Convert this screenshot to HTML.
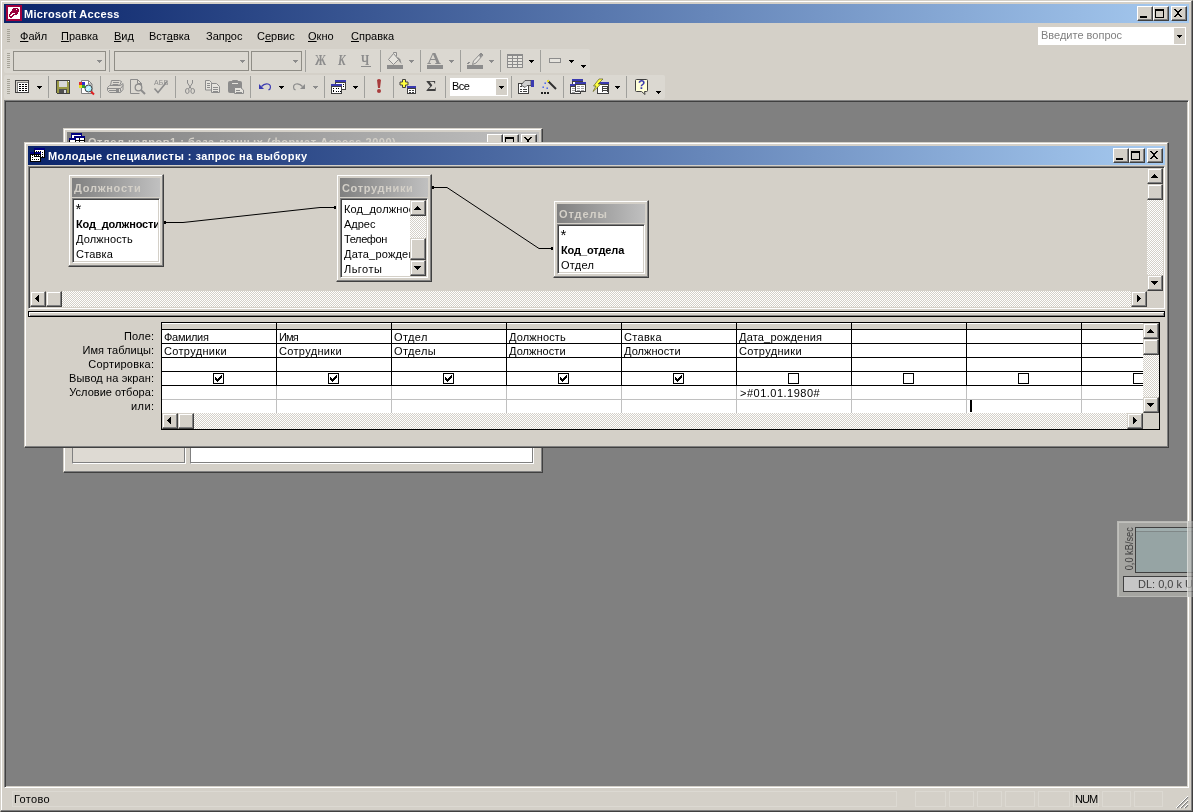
<!DOCTYPE html>
<html lang="ru"><head><meta charset="utf-8"><title>Microsoft Access</title>
<style>
*{box-sizing:border-box;margin:0;padding:0}
html,body{width:1193px;height:812px;overflow:hidden;background:#d4d0c8}
body{position:relative;font-family:"Liberation Sans",sans-serif;font-size:11px;color:#000;line-height:13px}
.a{position:absolute}
.t{position:absolute;white-space:nowrap;line-height:13px;height:13px}
.b{font-weight:bold}
u{text-decoration:underline;text-underline-offset:1px}
/* classic 3D */
.btn{position:absolute;background:#d4d0c8;border:1px solid;border-color:#fff #404040 #404040 #fff;box-shadow:inset -1px -1px 0 #808080}
.sb{position:absolute;background:#d4d0c8;border:1px solid;border-color:#d4d0c8 #404040 #404040 #d4d0c8;box-shadow:inset -1px -1px 0 #808080,inset 1px 1px 0 #fff}
.win{position:absolute;background:#d4d0c8;border:1px solid;border-color:#d4d0c8 #404040 #404040 #d4d0c8;box-shadow:inset -1px -1px 0 #808080,inset 1px 1px 0 #fff}
.sunk{position:absolute;border:1px solid;border-color:#808080 #fff #fff #808080;box-shadow:inset 1px 1px 0 #404040,inset -1px -1px 0 #d4d0c8}
.trk{position:absolute;background:repeating-conic-gradient(#fff 0% 25%,#d4d0c8 0% 50%) 0 0/2px 2px}
.tba{position:absolute;background:linear-gradient(90deg,#0a246a,#a6caf0)}
.tbi{position:absolute;background:linear-gradient(90deg,#808080,#c0c0c0)}
.sep{position:absolute;width:1px;background:#a0a09c}
svg{position:absolute;overflow:visible}
</style></head>
<body>
<div id="root" style="position:absolute;left:0;top:0;width:1193px;height:812px;will-change:transform">
<div class="a" style="left:0px;top:0px;width:1193px;height:812px;background:#d4d0c8;border:1px solid;border-color:#d4d0c8 #404040 #404040 #d4d0c8;box-shadow:inset -1px -1px 0 #808080,inset 1px 1px 0 #fff"></div>
<div class="tba" style="left:4px;top:4px;width:1185px;height:19px;"></div>
<svg style="left:6px;top:5px" width="16" height="16" viewBox="0 0 16 16" shape-rendering="crispEdges"><path d="M0 0h16v1h-16zM0 1h16v1h-16zM0 2h2v1h-2zM14 2h2v1h-2zM0 3h2v1h-2zM14 3h2v1h-2zM0 4h2v1h-2zM14 4h2v1h-2zM0 5h2v1h-2zM14 5h2v1h-2zM0 6h2v1h-2zM14 6h2v1h-2zM0 7h2v1h-2zM14 7h2v1h-2zM0 8h2v1h-2zM14 8h2v1h-2zM0 9h2v1h-2zM14 9h2v1h-2zM0 10h2v1h-2zM14 10h2v1h-2zM0 11h2v1h-2zM14 11h2v1h-2zM0 12h2v1h-2zM14 12h2v1h-2zM0 13h2v1h-2zM14 13h2v1h-2zM0 14h16v1h-16zM0 15h16v1h-16z" fill="#a0003c"/><path d="M2 2h12v1h-12zM2 3h5v1h-5zM12 3h2v1h-2zM2 4h4v1h-4zM10 4h1v1h-1zM13 4h1v1h-1zM2 5h4v1h-4zM13 5h1v1h-1zM2 6h3v1h-3zM13 6h1v1h-1zM2 7h2v1h-2zM12 7h2v1h-2zM2 8h2v1h-2zM6 8h3v1h-3zM12 8h2v1h-2zM2 9h1v1h-1zM5 9h2v1h-2zM11 9h3v1h-3zM2 10h1v1h-1zM4 10h2v1h-2zM8 10h6v1h-6zM2 11h1v1h-1zM7 11h7v1h-7zM2 12h2v1h-2zM6 12h8v1h-8zM2 13h12v1h-12z" fill="#fff"/><path d="M7 3h5v1h-5zM6 4h4v1h-4zM11 4h2v1h-2zM6 5h7v1h-7zM5 6h8v1h-8zM4 7h8v1h-8zM4 8h2v1h-2zM9 8h3v1h-3zM3 9h2v1h-2zM7 9h4v1h-4zM3 10h1v1h-1zM6 10h2v1h-2zM3 11h4v1h-4zM4 12h2v1h-2z" fill="#98003c"/></svg>
<div class="t b" style="left:24px;top:8px;color:#fff;letter-spacing:.32px">Microsoft Access</div>
<div class="btn" style="left:1137px;top:6px;width:16px;height:15px;"></div>
<div class="a" style="left:1140px;top:16px;width:7px;height:2px;background:#000"></div>
<div class="btn" style="left:1153px;top:6px;width:16px;height:15px;"></div>
<div class="a" style="left:1155px;top:9px;width:9px;height:9px;border:1px solid #000;border-top-width:2px"></div>
<div class="btn" style="left:1171px;top:6px;width:16px;height:15px;"></div>
<svg style="left:1174px;top:9px" width="8" height="8" shape-rendering="crispEdges"><path d="M0 0h2v1h-2zM6 0h2v1h-2zM1 1h2v1h-2zM5 1h2v1h-2zM2 2h4v1h-4zM3 3h2v1h-2zM3 4h2v1h-2zM2 5h4v1h-4zM1 6h2v1h-2zM5 6h2v1h-2zM0 7h2v1h-2zM6 7h2v1h-2z" fill="#000"/></svg>
<div class="a" style="left:7px;top:29px;width:3px;height:14px;background:repeating-linear-gradient(180deg,#a6a398 0 1px,transparent 1px 2px)"></div>
<div class="t " style="left:20px;top:30px;"><u>Ф</u>айл</div>
<div class="t " style="left:61px;top:30px;"><u>П</u>равка</div>
<div class="t " style="left:114px;top:30px;"><u>В</u>ид</div>
<div class="t " style="left:149px;top:30px;">Вст<u>а</u>вка</div>
<div class="t " style="left:206px;top:30px;">Зап<u>р</u>ос</div>
<div class="t " style="left:257px;top:30px;">С<u>е</u>рвис</div>
<div class="t " style="left:308px;top:30px;"><u>О</u>кно</div>
<div class="t " style="left:351px;top:30px;"><u>С</u>правка</div>
<div class="a" style="left:1038px;top:27px;width:148px;height:18px;background:#fff"></div>
<div class="a" style="left:1174px;top:28px;width:11px;height:16px;background:#d4d0c8"></div>
<svg style="left:1177px;top:35px" width="5" height="3" shape-rendering="crispEdges"><polygon points="0,0 5,0 2.5,3" fill="#000"/></svg>
<div class="t " style="left:1041px;top:29px;color:#808080">Введите вопрос</div>
<div class="a" style="left:4px;top:49px;width:586px;height:24px;background:#dbd8d1;border-radius:2px"></div>
<div class="a" style="left:4px;top:75px;width:661px;height:24px;background:#dbd8d1;border-radius:2px"></div>
<div class="a" style="left:7px;top:53px;width:3px;height:16px;background:repeating-linear-gradient(180deg,#a6a398 0 1px,transparent 1px 2px)"></div>
<div class="a" style="left:7px;top:79px;width:3px;height:16px;background:repeating-linear-gradient(180deg,#a6a398 0 1px,transparent 1px 2px)"></div>
<div class="a" style="left:13px;top:51px;width:93px;height:20px;border:1px solid #8f8d86"></div>
<svg style="left:97px;top:60px" width="5" height="3" shape-rendering="crispEdges"><polygon points="0,0 5,0 2.5,3" fill="#8c8c8c"/></svg>
<div class="a" style="left:114px;top:51px;width:135px;height:20px;border:1px solid #8f8d86"></div>
<svg style="left:240px;top:60px" width="5" height="3" shape-rendering="crispEdges"><polygon points="0,0 5,0 2.5,3" fill="#8c8c8c"/></svg>
<div class="a" style="left:251px;top:51px;width:51px;height:20px;border:1px solid #8f8d86"></div>
<svg style="left:293px;top:60px" width="5" height="3" shape-rendering="crispEdges"><polygon points="0,0 5,0 2.5,3" fill="#8c8c8c"/></svg>
<div class="sep" style="left:109px;top:50px;width:1px;height:22px;"></div>
<div class="sep" style="left:305px;top:50px;width:1px;height:22px;"></div>
<div class="sep" style="left:380px;top:50px;width:1px;height:22px;"></div>
<div class="sep" style="left:420px;top:50px;width:1px;height:22px;"></div>
<div class="sep" style="left:460px;top:50px;width:1px;height:22px;"></div>
<div class="sep" style="left:500px;top:50px;width:1px;height:22px;"></div>
<div class="sep" style="left:540px;top:50px;width:1px;height:22px;"></div>
<div class="sep" style="left:48px;top:76px;width:1px;height:22px;"></div>
<div class="sep" style="left:100px;top:76px;width:1px;height:22px;"></div>
<div class="sep" style="left:175px;top:76px;width:1px;height:22px;"></div>
<div class="sep" style="left:250px;top:76px;width:1px;height:22px;"></div>
<div class="sep" style="left:324px;top:76px;width:1px;height:22px;"></div>
<div class="sep" style="left:364px;top:76px;width:1px;height:22px;"></div>
<div class="sep" style="left:393px;top:76px;width:1px;height:22px;"></div>
<div class="sep" style="left:445px;top:76px;width:1px;height:22px;"></div>
<div class="sep" style="left:511px;top:76px;width:1px;height:22px;"></div>
<div class="sep" style="left:563px;top:76px;width:1px;height:22px;"></div>
<div class="sep" style="left:626px;top:76px;width:1px;height:22px;"></div>
<div class="t b" style="left:315px;top:53px;font-family:Liberation Serif,serif;font-size:14px;line-height:15px;height:15px;transform:scaleX(.8);transform-origin:0 0;color:#8c8c8c;letter-spacing:0">Ж</div>
<div class="t b" style="left:338px;top:53px;font-family:Liberation Serif,serif;font-size:14px;line-height:15px;height:15px;transform:scaleX(.8);transform-origin:0 0;color:#8c8c8c;font-style:italic">К</div>
<div class="t b" style="left:361px;top:53px;font-family:Liberation Serif,serif;font-size:14px;line-height:15px;height:15px;transform:scaleX(.8);transform-origin:0 0;color:#8c8c8c">Ч</div>
<div class="a" style="left:361px;top:66px;width:10px;height:1px;background:#8c8c8c"></div>
<div class="t b" style="left:427px;top:50px;font-family:Liberation Serif,serif;font-size:16px;line-height:18px;height:18px;transform:scaleX(1.2);transform-origin:0 0;color:#8c8c8c">A</div>
<div class="a" style="left:387px;top:65px;width:16px;height:4px;background:#8c8c8c"></div>
<div class="a" style="left:427px;top:65px;width:16px;height:4px;background:#8c8c8c"></div>
<div class="a" style="left:467px;top:65px;width:16px;height:4px;background:#8c8c8c"></div>
<svg style="left:409px;top:60px" width="5" height="3" shape-rendering="crispEdges"><polygon points="0,0 5,0 2.5,3" fill="#8c8c8c"/></svg>
<svg style="left:449px;top:60px" width="5" height="3" shape-rendering="crispEdges"><polygon points="0,0 5,0 2.5,3" fill="#8c8c8c"/></svg>
<svg style="left:489px;top:60px" width="5" height="3" shape-rendering="crispEdges"><polygon points="0,0 5,0 2.5,3" fill="#8c8c8c"/></svg>
<svg style="left:529px;top:60px" width="5" height="3" shape-rendering="crispEdges"><polygon points="0,0 5,0 2.5,3" fill="#000"/></svg>
<svg style="left:569px;top:60px" width="5" height="3" shape-rendering="crispEdges"><polygon points="0,0 5,0 2.5,3" fill="#000"/></svg>
<svg style="left:581px;top:65px" width="5" height="3" shape-rendering="crispEdges"><polygon points="0,0 5,0 2.5,3" fill="#000"/></svg>
<div class="a" style="left:549px;top:58px;width:12px;height:5px;border:1px solid #8c8c8c;background:#e6e4de"></div>
<svg style="left:15px;top:80px" width="14" height="13" viewBox="0 0 14 13" shape-rendering="crispEdges"><path d="M0 0h14v1h-14zM0 1h1v1h-1zM13 1h1v1h-1zM0 2h1v1h-1zM13 2h1v1h-1zM0 3h1v1h-1zM13 3h1v1h-1zM0 4h1v1h-1zM13 4h1v1h-1zM0 5h1v1h-1zM13 5h1v1h-1zM0 6h1v1h-1zM13 6h1v1h-1zM0 7h1v1h-1zM13 7h1v1h-1zM0 8h1v1h-1zM13 8h1v1h-1zM0 9h1v1h-1zM13 9h1v1h-1zM0 10h1v1h-1zM13 10h1v1h-1zM0 11h1v1h-1zM13 11h1v1h-1zM0 12h14v1h-14z" fill="#404040"/><path d="M1 1h12v1h-12zM1 2h1v1h-1zM1 3h1v1h-1zM1 4h1v1h-1zM1 5h1v1h-1zM1 6h1v1h-1zM1 7h1v1h-1zM1 8h1v1h-1zM1 9h1v1h-1zM1 10h1v1h-1zM1 11h1v1h-1z" fill="#d4d0c8"/><path d="M2 2h11v1h-11zM2 3h1v1h-1zM2 4h1v1h-1zM2 5h1v1h-1zM2 6h1v1h-1zM2 7h1v1h-1zM2 8h1v1h-1zM2 9h1v1h-1zM2 10h1v1h-1zM2 11h1v1h-1z" fill="#808080"/><path d="M3 3h10v1h-10zM3 4h1v1h-1zM6 4h1v1h-1zM9 4h1v1h-1zM12 4h1v1h-1zM3 5h10v1h-10zM3 6h1v1h-1zM6 6h1v1h-1zM9 6h1v1h-1zM12 6h1v1h-1zM3 7h10v1h-10zM3 8h1v1h-1zM6 8h1v1h-1zM9 8h1v1h-1zM12 8h1v1h-1zM3 9h10v1h-10zM3 10h1v1h-1zM6 10h1v1h-1zM9 10h1v1h-1zM12 10h1v1h-1zM3 11h10v1h-10z" fill="#fff"/><path d="M4 4h2v1h-2zM7 4h2v1h-2zM10 4h2v1h-2zM4 6h2v1h-2zM7 6h2v1h-2zM10 6h2v1h-2zM4 8h2v1h-2zM7 8h2v1h-2zM10 8h2v1h-2zM4 10h2v1h-2zM7 10h2v1h-2zM10 10h2v1h-2z" fill="#000"/></svg>
<svg style="left:37px;top:86px" width="5" height="3" shape-rendering="crispEdges"><polygon points="0,0 5,0 2.5,3" fill="#000"/></svg>
<svg style="left:56px;top:80px" width="14" height="14" viewBox="0 0 14 14" shape-rendering="crispEdges"><path d="M0 0h14v1h-14zM0 1h1v1h-1zM13 1h1v1h-1zM0 2h1v1h-1zM13 2h1v1h-1zM0 3h1v1h-1zM13 3h1v1h-1zM0 4h1v1h-1zM13 4h1v1h-1zM0 5h1v1h-1zM13 5h1v1h-1zM0 6h1v1h-1zM13 6h1v1h-1zM0 7h1v1h-1zM13 7h1v1h-1zM0 8h1v1h-1zM13 8h1v1h-1zM0 9h1v1h-1zM13 9h1v1h-1zM0 10h1v1h-1zM13 10h1v1h-1zM0 11h1v1h-1zM13 11h1v1h-1zM0 12h1v1h-1zM13 12h1v1h-1zM1 13h13v1h-13z" fill="#404040"/><path d="M1 1h2v1h-2zM11 1h1v1h-1zM1 2h2v1h-2zM11 2h2v1h-2zM1 3h2v1h-2zM11 3h2v1h-2zM1 4h2v1h-2zM11 4h2v1h-2zM1 5h2v1h-2zM11 5h2v1h-2zM1 6h2v1h-2zM11 6h2v1h-2zM1 7h12v1h-12zM1 8h12v1h-12zM1 9h2v1h-2zM11 9h2v1h-2zM1 10h2v1h-2zM11 10h2v1h-2zM1 11h2v1h-2zM11 11h2v1h-2zM1 12h2v1h-2zM11 12h2v1h-2z" fill="#9a9a46"/><path d="M3 1h8v1h-8zM3 2h8v1h-8zM3 3h8v1h-8zM3 4h8v1h-8zM3 5h8v1h-8zM3 6h8v1h-8zM8 10h2v1h-2zM8 11h2v1h-2zM8 12h2v1h-2z" fill="#d8d8d8"/><path d="M12 1h1v1h-1z" fill="#fff"/><path d="M3 9h8v1h-8zM3 10h5v1h-5zM10 10h1v1h-1zM3 11h5v1h-5zM10 11h1v1h-1zM3 12h5v1h-5zM10 12h1v1h-1z" fill="#505050"/></svg>
<svg style="left:0;top:0" width="700" height="100">
<path d="M393.500 53.500l5 6-5 5-5-5zM393.500 53.500v-1h3v4" fill="#e6e4de" stroke="#8c8c8c"/><path d="M397 57q4 1 4.500 7l-2.500-3z" fill="#8c8c8c"/>
<path d="M481 53l2 2-7 8-3.500 1.500 1-3.500z" fill="#e6e4de" stroke="#8c8c8c"/><path d="M479 54l4 0-3 4z" fill="#8c8c8c"/><rect x="468" y="62" width="2" height="1" fill="#8c8c8c"/><rect x="467" y="63" width="2" height="1" fill="#8c8c8c"/>
<g shape-rendering="crispEdges"><rect x="507" y="54" width="16" height="14" fill="#8c8c8c"/><rect x="508" y="56" width="4" height="2" fill="#e6e4de"/><rect x="508" y="59" width="4" height="2" fill="#e6e4de"/><rect x="508" y="62" width="4" height="2" fill="#e6e4de"/><rect x="508" y="65" width="4" height="2" fill="#e6e4de"/><rect x="513" y="56" width="4" height="2" fill="#e6e4de"/><rect x="513" y="59" width="4" height="2" fill="#e6e4de"/><rect x="513" y="62" width="4" height="2" fill="#e6e4de"/><rect x="513" y="65" width="4" height="2" fill="#e6e4de"/><rect x="518" y="56" width="4" height="2" fill="#e6e4de"/><rect x="518" y="59" width="4" height="2" fill="#e6e4de"/><rect x="518" y="62" width="4" height="2" fill="#e6e4de"/><rect x="518" y="65" width="4" height="2" fill="#e6e4de"/></g>
<path d="M81.500 80.500h7l3.500 3.500v9.500h-10.500z" fill="#fff" stroke="#808080"/><path d="M88.500 80.500v3.500h3.500" fill="none" stroke="#808080"/><g shape-rendering="crispEdges"><rect x="79" y="82" width="3" height="3" fill="#e03030"/><rect x="82" y="82" width="3" height="3" fill="#3030d0"/><rect x="79" y="85" width="3" height="3" fill="#e0e020"/><rect x="82" y="85" width="3" height="3" fill="#30a030"/></g><circle cx="88.500" cy="88.500" r="3.500" fill="#b0f0ff" stroke="#404040"/><path d="M86.500 90l3-3" stroke="#fff"/><path d="M91 91.500l3 3" stroke="#e02020" stroke-width="2"/>
<g fill="none" stroke="#8c8c8c"><path d="M111.500 80.500h8l2 1-2 4h-9z"/><path d="M113 82.500h6M112.500 84.500h6"/><path d="M109.500 85.500h11l2.500-2v6l-2.500 3h-11l-2-2v-3z"/><path d="M107.500 88.500h13v3M120.500 88.500l2.500-3M109 90.500h8"/></g><rect x="116" y="89" width="3" height="3" fill="#8c8c8c"/>
<g fill="none" stroke="#8c8c8c"><path d="M130.500 79.500h7l4 4v2M130.500 79.500v14h9"/><path d="M137.500 79.500v4h4"/><circle cx="138.500" cy="87.500" r="3.300" stroke-width="1.300"/><path d="M141 90l4 4" stroke-width="2"/></g>
<path d="M154.500 88.500l3.500 4 9-11" fill="none" stroke="#8c8c8c" stroke-width="1.600"/>
<g fill="none" stroke="#8c8c8c"><path d="M187.500 80v3l4 6M192.500 80v3l-4 6"/><ellipse cx="187.300" cy="91" rx="1.800" ry="2.500"/><ellipse cx="192.700" cy="91" rx="1.800" ry="2.500"/></g>
<g stroke="#8c8c8c" fill="#e6e4de"><path d="M205.500 80.500h4l2 2v7.500h-6z"/><path d="M211.500 83.500h5l3 3v6h-8z"/></g><path d="M207 83.500h3M207 85.500h3M207 87.500h3M213 87.500h5M213 89.500h5M213 91.500h5" stroke="#8c8c8c" shape-rendering="crispEdges"/>
<rect x="228" y="81" width="14" height="12" rx="2" fill="#8c8c8c"/><rect x="232" y="80" width="6" height="2" rx="1" fill="#8c8c8c"/><rect x="232" y="83" width="6" height="1" fill="#e6e4de"/><path d="M234.500 87.500h6l3 2.500v3.500h-9z" fill="#e6e4de" stroke="#8c8c8c"/><path d="M236 90.500h4M236 92.500h6" stroke="#8c8c8c" shape-rendering="crispEdges"/>
<path d="M259 84v5h5z" fill="#3a3ab0"/><path d="M261.500 86.500q3-3.500 6.500-2.500t2 5l-1.500 1" fill="none" stroke="#3a3ab0" stroke-width="1.200"/>
<path d="M305 84v5h-5z" fill="#8c8c8c"/><path d="M302.500 86.500q-3-3.500-6.500-2.500t-2 5l1.500 1" fill="none" stroke="#8c8c8c" stroke-width="1.200"/>
<g shape-rendering="crispEdges"><rect x="335" y="80" width="11" height="2" fill="#3a3ab0"/><rect x="335.500" y="82.500" width="10" height="7" fill="#fff" stroke="#404040"/><path d="M337 84.500h7M343 86.500h2" stroke="#000" stroke-dasharray="1 1"/><rect x="331" y="84" width="11" height="2" fill="#3a3ab0"/><rect x="331.500" y="86.500" width="10" height="7" fill="#fff" stroke="#404040"/><path d="M333 88.500h2M336 88.500h4M333 90.500h2M333 91.500h0M336 91.500h5M333 91.500h2" stroke="#000" stroke-dasharray="1 1"/></g>
<path d="M377 80q2-2 4 0l-1 8h-2z" fill="#a83c3c"/><circle cx="379" cy="91" r="2" fill="#a83c3c"/>
<path d="M402.500 79.500h3v2.500h2.500v3h-2.500v2.500h-3v-2.500h-2.500v-3h2.500z" fill="#ffff40" stroke="#404040"/><g shape-rendering="crispEdges"><rect x="407" y="86" width="9" height="2" fill="#3a3ab0"/><rect x="407.500" y="88.500" width="8" height="5" fill="#fff" stroke="#404040"/><path d="M409 90.500h2M412 90.500h2M409 92.500h2M412 92.500h2" stroke="#404040"/></g>
<g shape-rendering="crispEdges"><rect x="518.500" y="83.500" width="10" height="10" fill="#fff" stroke="#404040"/><path d="M520 86.500h2M520 89.500h2M523 89.500h4M520 91.500h2M523 91.500h4" stroke="#404040"/></g><path d="M521 85l4-4.500h6v5h-4l-2 2z" fill="#d0d0d0" stroke="#404040" stroke-width=".8"/><rect x="531" y="80" width="3" height="7" fill="#3a3ab0"/>
<path d="M547.500 80.500l8.500 8.500" stroke="#303030" stroke-width="2"/><rect x="547" y="80" width="2" height="2" fill="#e8e020"/><g fill="#3050f0"><rect x="544.500" y="82.500" width="1.400" height="1.400"/><rect x="542.500" y="86.500" width="1.400" height="1.400"/><rect x="546.500" y="87.500" width="1.400" height="1.400"/></g><g fill="#202020"><rect x="541" y="92" width="2" height="2"/><rect x="544" y="92" width="2" height="2"/><rect x="547" y="92" width="2" height="2"/></g>
<g shape-rendering="crispEdges"><rect x="572" y="79" width="11" height="2" fill="#3a3ab0"/><rect x="572.5" y="81.5" width="10" height="6" fill="#fff" stroke="#404040"/><rect x="570" y="84" width="11" height="2" fill="#3a3ab0"/><rect x="570.5" y="86.5" width="10" height="7" fill="#fff" stroke="#404040"/><path d="M572 88.500h3M572 90.500h3M572 92.500h3" stroke="#a0a0a0"/><rect x="575" y="82" width="11" height="2" fill="#3a3ab0"/><rect x="575.5" y="84.5" width="10" height="7" fill="#fff" stroke="#404040"/><path d="M577 86.500h3M581 86.500h3M577 88.500h3M581 88.500h3M577 90.500h3M581 90.500h3" stroke="#a0a0a0"/></g>
<g shape-rendering="crispEdges"><rect x="597" y="82" width="12" height="2" fill="#3a3ab0"/><rect x="597.5" y="84.5" width="11" height="9" fill="#fff" stroke="#404040"/><path d="M603 86.500h4M603 90.500h4M602.500 86v6M607.500 86v6M603 88.500h4" stroke="#404040" fill="none"/></g><path d="M599 79h4l-5 5h3l-8 7.500 3-5.500h-2.500z" fill="#ffff40" stroke="#606020" stroke-width=".7"/>
<path d="M636.500 79.500h10q1 0 1 1v10q0 1-1 1h-2l.5 3-3.500-3h-5q-1 0-1-1v-10q0-1 1-1z" fill="#ffffd8" stroke="#404040"/>
</svg>
<div class="t " style="left:154px;top:79px;color:#8c8c8c;font-size:7px;line-height:7px;height:7px;letter-spacing:.2px">АБВ</div>
<svg style="left:279px;top:86px" width="5" height="3" shape-rendering="crispEdges"><polygon points="0,0 5,0 2.5,3" fill="#000"/></svg>
<svg style="left:313px;top:86px" width="5" height="3" shape-rendering="crispEdges"><polygon points="0,0 5,0 2.5,3" fill="#8c8c8c"/></svg>
<svg style="left:353px;top:86px" width="5" height="3" shape-rendering="crispEdges"><polygon points="0,0 5,0 2.5,3" fill="#000"/></svg>
<svg style="left:615px;top:86px" width="5" height="3" shape-rendering="crispEdges"><polygon points="0,0 5,0 2.5,3" fill="#000"/></svg>
<svg style="left:656px;top:91px" width="5" height="3" shape-rendering="crispEdges"><polygon points="0,0 5,0 2.5,3" fill="#000"/></svg>
<div class="t b" style="left:426px;top:79px;font-family:Liberation Serif,serif;font-size:14px;line-height:16px;height:16px;color:#404040;transform:scaleX(1.15);transform-origin:0 0">Σ</div>
<div class="a" style="left:450px;top:78px;width:58px;height:18px;background:#fff"></div>
<div class="a" style="left:496px;top:79px;width:11px;height:16px;background:#d4d0c8"></div>
<svg style="left:499px;top:86px" width="5" height="3" shape-rendering="crispEdges"><polygon points="0,0 5,0 2.5,3" fill="#000"/></svg>
<div class="t " style="left:452px;top:80px;letter-spacing:-.6px">Все</div>
<div class="t b" style="left:638px;top:79px;color:#3a3ab0;font-size:12px;line-height:13px">?</div>
<div class="a" style="left:4px;top:100px;width:1185px;height:688px;background:#808080;border:1px solid;border-color:#808080 #fff #fff #808080;box-shadow:inset 1px 1px 0 #404040,inset -1px -1px 0 #d4d0c8"></div>
<div class="win" style="left:63px;top:128px;width:480px;height:345px;"></div>
<div class="tbi" style="left:67px;top:132px;width:472px;height:19px;"></div>
<svg style="left:69px;top:133px" width="16" height="16" viewBox="0 0 16 16" shape-rendering="crispEdges"><rect x="2.500" y="0.500" width="10" height="8" fill="#fff" stroke="#000080"/><rect x="2" y="0" width="11" height="2" fill="#000080"/><rect x="5.500" y="3.500" width="10" height="9" fill="#fff" stroke="#000"/><rect x="5" y="3" width="11" height="2" fill="#000080"/><rect x="0.500" y="5.500" width="6" height="8" fill="#fff" stroke="#000"/><rect x="0" y="5" width="7" height="2" fill="#000080"/><path d="M7 7.500h8M7 10.500h8M10.500 5v8" stroke="#000"/></svg>
<div class="t b" style="left:88px;top:136px;color:#d4d0c8;letter-spacing:.53px">Отдел кадров1 : база данных (формат Access 2000)</div>
<div class="btn" style="left:487px;top:134px;width:16px;height:15px;"></div>
<div class="a" style="left:490px;top:144px;width:7px;height:2px;background:#000"></div>
<div class="btn" style="left:503px;top:134px;width:16px;height:15px;"></div>
<div class="a" style="left:505px;top:137px;width:9px;height:9px;border:1px solid #000;border-top-width:2px"></div>
<div class="btn" style="left:521px;top:134px;width:16px;height:15px;"></div>
<svg style="left:524px;top:137px" width="8" height="8" shape-rendering="crispEdges"><path d="M0 0h2v1h-2zM6 0h2v1h-2zM1 1h2v1h-2zM5 1h2v1h-2zM2 2h4v1h-4zM3 3h2v1h-2zM3 4h2v1h-2zM2 5h4v1h-4zM1 6h2v1h-2zM5 6h2v1h-2zM0 7h2v1h-2zM6 7h2v1h-2z" fill="#000"/></svg>
<div class="a" style="left:72px;top:440px;width:114px;height:24px;background:#dedad3;border:1px solid;border-color:#808080 #fff #fff #808080;box-shadow:inset -1px -1px 0 #808080"></div>
<div class="a" style="left:190px;top:440px;width:344px;height:24px;background:#fff;border:1px solid;border-color:#808080 #fff #fff #808080;box-shadow:inset -1px -1px 0 #808080"></div>
<div class="win" style="left:24px;top:142px;width:1145px;height:306px;"></div>
<div class="tba" style="left:28px;top:146px;width:1137px;height:19px;"></div>
<svg style="left:30px;top:148px" width="15" height="14" viewBox="0 0 15 14" shape-rendering="crispEdges"><path d="M4 0h11v1h-11zM4 1h11v1h-11zM0 4h4v1h-4zM5 4h6v1h-6zM0 5h4v1h-4zM5 5h6v1h-6z" fill="#000080"/><path d="M4 2h1v1h-1zM14 2h1v1h-1zM4 3h1v1h-1zM6 3h1v1h-1zM8 3h1v1h-1zM10 3h1v1h-1zM14 3h1v1h-1zM4 4h1v1h-1zM12 4h1v1h-1zM14 4h1v1h-1zM4 5h1v1h-1zM14 5h1v1h-1zM0 6h11v1h-11zM12 6h1v1h-1zM14 6h1v1h-1zM0 7h1v1h-1zM2 7h1v1h-1zM4 7h1v1h-1zM6 7h1v1h-1zM8 7h1v1h-1zM10 7h1v1h-1zM14 7h1v1h-1zM0 8h1v1h-1zM4 8h7v1h-7zM12 8h1v1h-1zM14 8h1v1h-1zM0 9h1v1h-1zM2 9h1v1h-1zM10 9h5v1h-5zM0 10h1v1h-1zM10 10h1v1h-1zM0 11h1v1h-1zM2 11h1v1h-1zM4 11h1v1h-1zM6 11h1v1h-1zM8 11h1v1h-1zM10 11h1v1h-1zM0 12h1v1h-1zM10 12h1v1h-1zM0 13h11v1h-11z" fill="#000"/><path d="M5 2h9v1h-9zM5 3h1v1h-1zM7 3h1v1h-1zM9 3h1v1h-1zM11 3h3v1h-3zM11 4h1v1h-1zM13 4h1v1h-1zM11 5h3v1h-3zM11 6h1v1h-1zM13 6h1v1h-1zM1 7h1v1h-1zM3 7h1v1h-1zM5 7h1v1h-1zM7 7h1v1h-1zM9 7h1v1h-1zM11 7h3v1h-3zM1 8h3v1h-3zM11 8h1v1h-1zM13 8h1v1h-1zM1 9h1v1h-1zM3 9h7v1h-7zM1 10h9v1h-9zM1 11h1v1h-1zM3 11h1v1h-1zM5 11h1v1h-1zM7 11h1v1h-1zM9 11h1v1h-1zM1 12h9v1h-9z" fill="#fff"/></svg>
<div class="t b" style="left:48px;top:150px;color:#fff;letter-spacing:.45px">Молодые специалисты : запрос на выборку</div>
<div class="btn" style="left:1113px;top:148px;width:16px;height:15px;"></div>
<div class="a" style="left:1116px;top:158px;width:7px;height:2px;background:#000"></div>
<div class="btn" style="left:1129px;top:148px;width:16px;height:15px;"></div>
<div class="a" style="left:1131px;top:151px;width:9px;height:9px;border:1px solid #000;border-top-width:2px"></div>
<div class="btn" style="left:1147px;top:148px;width:16px;height:15px;"></div>
<svg style="left:1150px;top:151px" width="8" height="8" shape-rendering="crispEdges"><path d="M0 0h2v1h-2zM6 0h2v1h-2zM1 1h2v1h-2zM5 1h2v1h-2zM2 2h4v1h-4zM3 3h2v1h-2zM3 4h2v1h-2zM2 5h4v1h-4zM1 6h2v1h-2zM5 6h2v1h-2zM0 7h2v1h-2zM6 7h2v1h-2z" fill="#000"/></svg>
<div class="sunk" style="left:28px;top:166px;width:1137px;height:143px;"></div>
<div class="trk" style="left:1147px;top:168px;width:16px;height:123px;"></div>
<div class="sb" style="left:1147px;top:168px;width:16px;height:16px;"></div>
<svg style="left:1151px;top:174px" width="7" height="4" shape-rendering="crispEdges"><polygon points="0,4 7,4 3.5,0" fill="#000"/></svg>
<div class="sb" style="left:1147px;top:184px;width:16px;height:16px;"></div>
<div class="sb" style="left:1147px;top:275px;width:16px;height:16px;"></div>
<svg style="left:1151px;top:281px" width="7" height="4" shape-rendering="crispEdges"><polygon points="0,0 7,0 3.5,4" fill="#000"/></svg>
<div class="trk" style="left:30px;top:291px;width:1117px;height:16px;"></div>
<div class="sb" style="left:30px;top:291px;width:16px;height:16px;"></div>
<svg style="left:35px;top:295px" width="4" height="7" shape-rendering="crispEdges"><polygon points="4,0 4,7 0,3.5" fill="#000"/></svg>
<div class="sb" style="left:46px;top:291px;width:16px;height:16px;"></div>
<div class="sb" style="left:1131px;top:291px;width:16px;height:16px;"></div>
<svg style="left:1137px;top:295px" width="4" height="7" shape-rendering="crispEdges"><polygon points="0,0 0,7 4,3.5" fill="#000"/></svg>
<div class="win" style="left:68px;top:174px;width:96px;height:93px;"></div>
<div class="tbi" style="left:72px;top:178px;width:88px;height:19px;"></div>
<div class="t b" style="left:74px;top:182px;color:#d4d0c8;letter-spacing:.75px">Должности</div>
<div class="sunk" style="left:72px;top:198px;width:88px;height:65px;background:#fff;overflow:hidden"></div>
<div class="t" style="left:75.5px;top:201px;font-size:15px;line-height:16px;height:16px">*</div>
<div class="t b" style="left:76px;top:217px;width:82px;overflow:hidden;line-height:14px;height:14px;letter-spacing:-0.17px">Код_должности</div>
<div class="t" style="left:76px;top:232px;width:82px;overflow:hidden;line-height:14px;height:14px;letter-spacing:0.12px">Должность</div>
<div class="t" style="left:76px;top:247px;width:82px;overflow:hidden;line-height:14px;height:14px;letter-spacing:0.2px">Ставка</div>
<div class="win" style="left:336px;top:174px;width:96px;height:108px;"></div>
<div class="tbi" style="left:340px;top:178px;width:88px;height:19px;"></div>
<div class="t b" style="left:342px;top:182px;color:#d4d0c8;letter-spacing:.67px">Сотрудники</div>
<div class="sunk" style="left:340px;top:198px;width:88px;height:80px;background:#fff;overflow:hidden"></div>
<div class="t" style="left:344px;top:202px;width:66px;overflow:hidden;line-height:14px;height:14px;letter-spacing:0.17px">Код_должности</div>
<div class="t" style="left:344px;top:217px;width:66px;overflow:hidden;line-height:14px;height:14px;letter-spacing:0px">Адрес</div>
<div class="t" style="left:344px;top:232px;width:66px;overflow:hidden;line-height:14px;height:14px;letter-spacing:-0.38px">Телефон</div>
<div class="t" style="left:344px;top:247px;width:66px;overflow:hidden;line-height:14px;height:14px;letter-spacing:0.19px">Дата_рождения</div>
<div class="t" style="left:344px;top:262px;width:66px;overflow:hidden;line-height:14px;height:14px;letter-spacing:0.46px">Льготы</div>
<div class="trk" style="left:410px;top:200px;width:16px;height:76px;"></div>
<div class="sb" style="left:410px;top:200px;width:16px;height:16px;"></div>
<svg style="left:414px;top:206px" width="7" height="4" shape-rendering="crispEdges"><polygon points="0,4 7,4 3.5,0" fill="#000"/></svg>
<div class="sb" style="left:410px;top:238px;width:16px;height:22px;"></div>
<div class="sb" style="left:410px;top:260px;width:16px;height:16px;"></div>
<svg style="left:414px;top:266px" width="7" height="4" shape-rendering="crispEdges"><polygon points="0,0 7,0 3.5,4" fill="#000"/></svg>
<div class="win" style="left:553px;top:200px;width:96px;height:78px;"></div>
<div class="tbi" style="left:557px;top:204px;width:88px;height:19px;"></div>
<div class="t b" style="left:559px;top:208px;color:#d4d0c8;letter-spacing:.9px">Отделы</div>
<div class="sunk" style="left:557px;top:224px;width:88px;height:50px;background:#fff;overflow:hidden"></div>
<div class="t" style="left:560.5px;top:227px;font-size:15px;line-height:16px;height:16px">*</div>
<div class="t b" style="left:561px;top:243px;width:82px;overflow:hidden;line-height:14px;height:14px;letter-spacing:-0.11px">Код_отдела</div>
<div class="t" style="left:561px;top:258px;width:82px;overflow:hidden;line-height:14px;height:14px;letter-spacing:0.25px">Отдел</div>
<svg style="left:0;top:0" width="1193" height="812"><g fill="none" stroke="#000" stroke-width="1"><path d="M164 222.500H183L320 207.500H336"/><path d="M432 187.500H447L539 248.500H553"/></g><g fill="#000"><rect x="164" y="221" width="2" height="3"/><rect x="334" y="206" width="2" height="3"/><rect x="432" y="186" width="2" height="3"/><rect x="551" y="247" width="2" height="3"/></g></svg>
<div class="a" style="left:28px;top:311px;width:1137px;height:6px;background:#d4d0c8;border:1px solid #000;box-shadow:inset 1px 1px 0 #fff,inset -1px -1px 0 #808080"></div>
<div class="t" style="left:20px;width:134.15px;text-align:right;top:330px;letter-spacing:0.15px">Поле:</div>
<div class="t" style="left:20px;width:134.03px;text-align:right;top:344px;letter-spacing:0.03px">Имя таблицы:</div>
<div class="t" style="left:20px;width:134.23px;text-align:right;top:358px;letter-spacing:0.23px">Сортировка:</div>
<div class="t" style="left:20px;width:134.11px;text-align:right;top:372px;letter-spacing:0.11px">Вывод на экран:</div>
<div class="t" style="left:20px;width:134.04px;text-align:right;top:386px;letter-spacing:0.04px">Условие отбора:</div>
<div class="t" style="left:20px;width:134.40px;text-align:right;top:400px;letter-spacing:0.4px">или:</div>
<div class="a" style="left:161px;top:322px;width:999px;height:108px;background:#fff;border:1px solid #000"></div>
<div class="a" style="left:162px;top:323px;width:981px;height:6px;background:#d4d0c8;box-shadow:inset 0 1px 0 #fff"></div>
<div class="a" style="left:162px;top:329px;width:981px;height:1px;background:#000"></div>
<div class="a" style="left:162px;top:343px;width:981px;height:1px;background:#000"></div>
<div class="a" style="left:162px;top:357px;width:981px;height:1px;background:#000"></div>
<div class="a" style="left:162px;top:371px;width:981px;height:1px;background:#000"></div>
<div class="a" style="left:162px;top:385px;width:981px;height:1px;background:#000"></div>
<div class="a" style="left:162px;top:399px;width:981px;height:1px;background:#c0c0c0"></div>
<div class="a" style="left:276px;top:323px;width:1px;height:63px;background:#000"></div>
<div class="a" style="left:276px;top:386px;width:1px;height:27px;background:#c0c0c0"></div>
<div class="a" style="left:391px;top:323px;width:1px;height:63px;background:#000"></div>
<div class="a" style="left:391px;top:386px;width:1px;height:27px;background:#c0c0c0"></div>
<div class="a" style="left:506px;top:323px;width:1px;height:63px;background:#000"></div>
<div class="a" style="left:506px;top:386px;width:1px;height:27px;background:#c0c0c0"></div>
<div class="a" style="left:621px;top:323px;width:1px;height:63px;background:#000"></div>
<div class="a" style="left:621px;top:386px;width:1px;height:27px;background:#c0c0c0"></div>
<div class="a" style="left:736px;top:323px;width:1px;height:63px;background:#000"></div>
<div class="a" style="left:736px;top:386px;width:1px;height:27px;background:#c0c0c0"></div>
<div class="a" style="left:851px;top:323px;width:1px;height:63px;background:#000"></div>
<div class="a" style="left:851px;top:386px;width:1px;height:27px;background:#c0c0c0"></div>
<div class="a" style="left:966px;top:323px;width:1px;height:63px;background:#000"></div>
<div class="a" style="left:966px;top:386px;width:1px;height:27px;background:#c0c0c0"></div>
<div class="a" style="left:1081px;top:323px;width:1px;height:63px;background:#000"></div>
<div class="a" style="left:1081px;top:386px;width:1px;height:27px;background:#c0c0c0"></div>
<div class="t " style="left:164px;top:331px;letter-spacing:-0.3px">Фамилия</div>
<div class="t " style="left:164px;top:345px;letter-spacing:0.33px">Сотрудники</div>
<div class="t " style="left:279px;top:331px;letter-spacing:-0.9px">Имя</div>
<div class="t " style="left:279px;top:345px;letter-spacing:0.33px">Сотрудники</div>
<div class="t " style="left:394px;top:331px;letter-spacing:0.4px">Отдел</div>
<div class="t " style="left:394px;top:345px;letter-spacing:0.4px">Отделы</div>
<div class="t " style="left:509px;top:331px;letter-spacing:0.12px">Должность</div>
<div class="t " style="left:509px;top:345px;letter-spacing:0.06px">Должности</div>
<div class="t " style="left:624px;top:331px;letter-spacing:0.32px">Ставка</div>
<div class="t " style="left:624px;top:345px;letter-spacing:0.06px">Должности</div>
<div class="t " style="left:739px;top:331px;letter-spacing:0.19px">Дата_рождения</div>
<div class="t " style="left:739px;top:345px;letter-spacing:0.33px">Сотрудники</div>
<div class="a" style="left:213px;top:373px;width:11px;height:11px;background:#fff;border:1px solid #000"></div>
<svg style="left:215px;top:375px" width="7" height="7" viewBox="0 0 7 7" shape-rendering="crispEdges"><path d="M0 2v3l2 2 5-5v-3l-5 5z" fill="#000"/></svg>
<div class="a" style="left:328px;top:373px;width:11px;height:11px;background:#fff;border:1px solid #000"></div>
<svg style="left:330px;top:375px" width="7" height="7" viewBox="0 0 7 7" shape-rendering="crispEdges"><path d="M0 2v3l2 2 5-5v-3l-5 5z" fill="#000"/></svg>
<div class="a" style="left:443px;top:373px;width:11px;height:11px;background:#fff;border:1px solid #000"></div>
<svg style="left:445px;top:375px" width="7" height="7" viewBox="0 0 7 7" shape-rendering="crispEdges"><path d="M0 2v3l2 2 5-5v-3l-5 5z" fill="#000"/></svg>
<div class="a" style="left:558px;top:373px;width:11px;height:11px;background:#fff;border:1px solid #000"></div>
<svg style="left:560px;top:375px" width="7" height="7" viewBox="0 0 7 7" shape-rendering="crispEdges"><path d="M0 2v3l2 2 5-5v-3l-5 5z" fill="#000"/></svg>
<div class="a" style="left:673px;top:373px;width:11px;height:11px;background:#fff;border:1px solid #000"></div>
<svg style="left:675px;top:375px" width="7" height="7" viewBox="0 0 7 7" shape-rendering="crispEdges"><path d="M0 2v3l2 2 5-5v-3l-5 5z" fill="#000"/></svg>
<div class="a" style="left:788px;top:373px;width:11px;height:11px;background:#fff;border:1px solid #000"></div>
<div class="a" style="left:903px;top:373px;width:11px;height:11px;background:#fff;border:1px solid #000"></div>
<div class="a" style="left:1018px;top:373px;width:11px;height:11px;background:#fff;border:1px solid #000"></div>
<div class="a" style="left:1133px;top:373px;width:10px;height:11px;background:#fff;border:1px solid #000;border-right:0"></div>
<div class="t " style="left:740px;top:387px;letter-spacing:.5px">&gt;#01.01.1980#</div>
<div class="a" style="left:970px;top:400px;width:2px;height:12px;background:#000"></div>
<div class="trk" style="left:1143px;top:323px;width:16px;height:90px;"></div>
<div class="sb" style="left:1143px;top:323px;width:16px;height:16px;"></div>
<svg style="left:1147px;top:329px" width="7" height="4" shape-rendering="crispEdges"><polygon points="0,4 7,4 3.5,0" fill="#000"/></svg>
<div class="sb" style="left:1143px;top:339px;width:16px;height:16px;"></div>
<div class="sb" style="left:1143px;top:397px;width:16px;height:16px;"></div>
<svg style="left:1147px;top:403px" width="7" height="4" shape-rendering="crispEdges"><polygon points="0,0 7,0 3.5,4" fill="#000"/></svg>
<div class="trk" style="left:162px;top:413px;width:981px;height:16px;"></div>
<div class="sb" style="left:162px;top:413px;width:16px;height:16px;"></div>
<svg style="left:167px;top:417px" width="4" height="7" shape-rendering="crispEdges"><polygon points="4,0 4,7 0,3.5" fill="#000"/></svg>
<div class="sb" style="left:178px;top:413px;width:16px;height:16px;"></div>
<div class="sb" style="left:1127px;top:413px;width:16px;height:16px;"></div>
<svg style="left:1133px;top:417px" width="4" height="7" shape-rendering="crispEdges"><polygon points="0,0 0,7 4,3.5" fill="#000"/></svg>
<div class="a" style="left:1143px;top:413px;width:16px;height:16px;background:#d4d0c8"></div>
<div class="t " style="left:14px;top:792px;line-height:14px;height:14px;letter-spacing:.35px">Готово</div>
<div class="a" style="left:12px;top:791px;width:885px;height:16px;border:1px solid #dcd9d2"></div>
<div class="a" style="left:915px;top:791px;width:31px;height:16px;border:1px solid #dcd9d2"></div>
<div class="a" style="left:949px;top:791px;width:25px;height:16px;border:1px solid #dcd9d2"></div>
<div class="a" style="left:977px;top:791px;width:25px;height:16px;border:1px solid #dcd9d2"></div>
<div class="a" style="left:1005px;top:791px;width:30px;height:16px;border:1px solid #dcd9d2"></div>
<div class="a" style="left:1038px;top:791px;width:32px;height:16px;border:1px solid #dcd9d2"></div>
<div class="a" style="left:1073px;top:791px;width:26px;height:16px;border:1px solid #dcd9d2"></div>
<div class="a" style="left:1102px;top:791px;width:29px;height:16px;border:1px solid #dcd9d2"></div>
<div class="a" style="left:1134px;top:791px;width:29px;height:16px;border:1px solid #dcd9d2"></div>
<div class="t " style="left:1075px;top:792px;line-height:14px;height:14px;letter-spacing:-1px">NUM</div>
<svg style="left:1176px;top:796px" width="13" height="13" viewBox="0 0 13 13"><g stroke="#808080" stroke-width="1.300"><path d="M12 1L1 12M12 5L5 12M12 9L9 12"/></g><g stroke="#fff" stroke-width="1"><path d="M12 0L0 12M12 4L4 12M12 8L8 12"/></g></svg>
<div class="a" style="left:1117px;top:521px;width:76px;height:76px;background:rgba(168,168,164,.93);border:1px solid #b8b8b4;border-right:0;box-shadow:inset 1px 1px 0 #c0c0bc"></div>
<div class="a" style="left:1135px;top:527px;width:58px;height:46px;background:#96a4a4;border:1px solid #404040;border-right:0;box-shadow:inset 0 3px 0 #a0aeae,inset 0 4px 0 #808888"></div>
<div class="a" style="left:1123px;top:576px;width:70px;height:16px;background:#c6c6c6;border:1px solid #404040;border-right:0"></div>
<div class="t " style="left:1138px;top:577px;color:#404040;line-height:14px;height:14px">DL: 0,0 k U</div>
<div class="t" style="left:1123px;top:571px;transform-origin:0 0;transform:rotate(-90deg) scale(.84,1);color:#404040;font-size:11px;width:53px;text-align:center">0,0 kB/sec</div>
<div class="a" style="left:1187px;top:521px;width:6px;height:76px;background:linear-gradient(90deg,#e8e8e4 0 1px,#c4c4c0 1px 4px,#909090 4px 5px,#606060 5px 6px);opacity:.75"></div>
</div>
</body></html>
